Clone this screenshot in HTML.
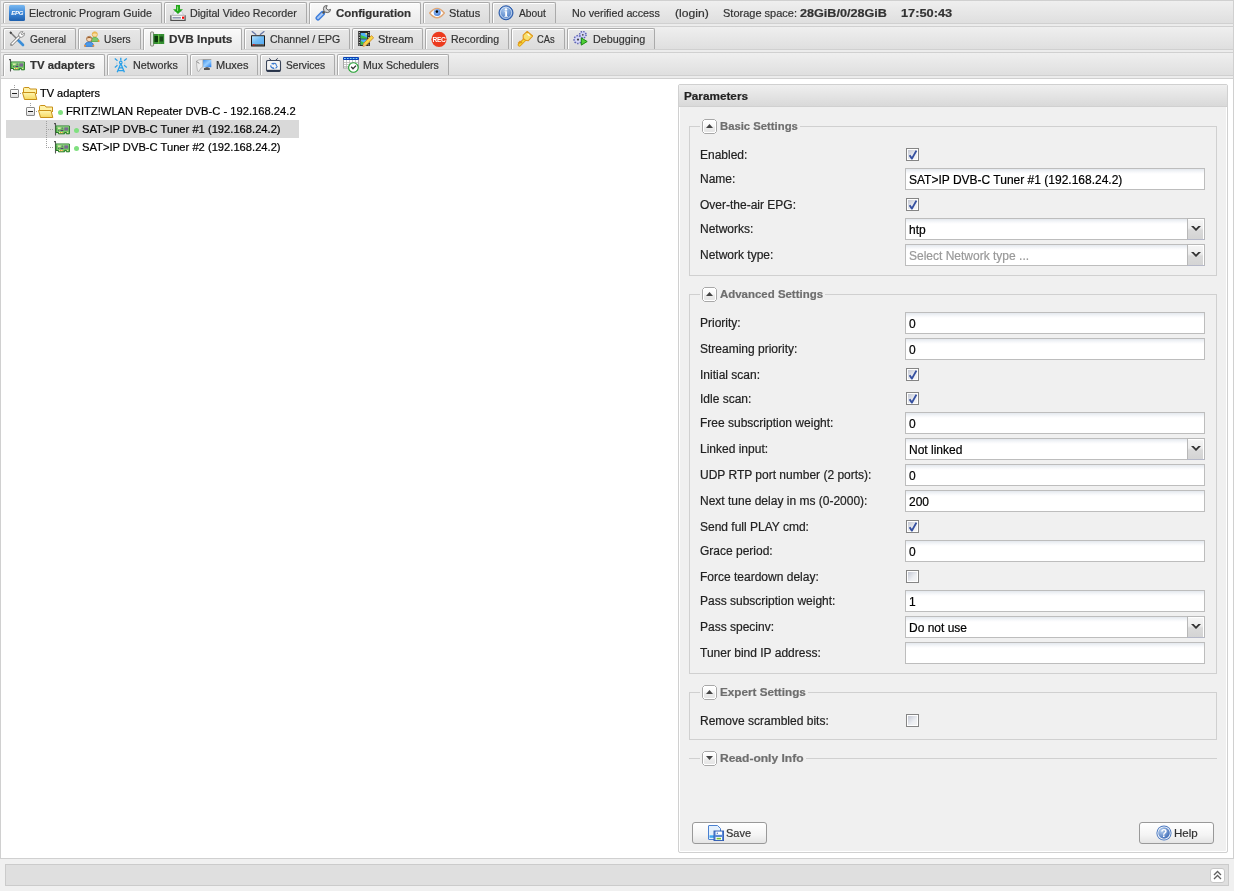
<!DOCTYPE html>
<html><head><meta charset="utf-8"><style>
html,body{margin:0;padding:0;}
body{width:1234px;height:891px;position:relative;overflow:hidden;background:#f0f0f0;font-family:"Liberation Sans", sans-serif;}
div,svg{box-sizing:border-box;}
#wrap{position:absolute;left:0;top:0;width:1234px;height:891px;will-change:transform;-webkit-text-stroke:0.2px;}
</style></head><body><div id="wrap">
<div style="position:absolute;left:0px;top:0px;width:1234px;height:859px;background:#fff;border:1px solid #d0d0d0;"></div>
<div style="position:absolute;left:1px;top:1px;width:1232px;height:22px;background:linear-gradient(#efefef,#dfdfdf);"></div>
<div style="position:absolute;left:1px;top:23px;width:1232px;height:1px;background:#d0d0d0;"></div>
<div style="position:absolute;left:1px;top:24px;width:1232px;height:2px;background:#ececec;"></div>
<div style="position:absolute;left:1px;top:26px;width:1232px;height:1px;background:#d0d0d0;"></div>
<div style="position:absolute;left:3px;top:2px;width:159px;height:21px;background:linear-gradient(#e8e8e8,#dcdcdc);border:1px solid #aaaaaa;border-bottom:none;border-radius:2px 2px 0 0;box-shadow:inset 1px 1px 0 #fff;"></div>
<svg style="position:absolute;left:9px;top:5px" width="16" height="16" viewBox="0 0 16 16"><defs><linearGradient id="gepg" x1="0" y1="0" x2="0" y2="1"><stop offset="0" stop-color="#79b8f0"/><stop offset="0.5" stop-color="#3d86d6"/><stop offset="1" stop-color="#1d5fae"/></linearGradient></defs>
<rect x="0" y="0" width="16" height="16" rx="1.5" fill="url(#gepg)"/>
<text x="8.2" y="9.6" font-family="Liberation Sans" font-size="6" font-weight="700" font-style="italic" fill="#fff" text-anchor="middle" letter-spacing="-0.2">EPG</text></svg>
<div style="position:absolute;left:29.02px;top:6.69px;font-size:11px;line-height:13px;font-weight:400;color:#333;white-space:pre;transform:scaleX(0.9760);transform-origin:0 0;">Electronic Program Guide</div>
<div style="position:absolute;left:164px;top:2px;width:143px;height:21px;background:linear-gradient(#e8e8e8,#dcdcdc);border:1px solid #aaaaaa;border-bottom:none;border-radius:2px 2px 0 0;box-shadow:inset 1px 1px 0 #fff;"></div>
<svg style="position:absolute;left:170px;top:5px" width="16" height="16" viewBox="0 0 16 16"><path d="M2.5 10.2 L4.2 6.5 H11.8 L13.5 10.2 Z" fill="#f2f0fa" stroke="#c0c0c8" stroke-width="0.7"/>
<path d="M0.9 10.2 V15.4 H15.1 V10.2" fill="#fff" stroke="#505050" stroke-width="1.2"/>
<path d="M1 10.4 H15" stroke="#b0b0b0" stroke-width="0.9"/>
<rect x="2.5" y="11.9" width="8.5" height="1.7" fill="#9098b0"/><rect x="12" y="11.6" width="2.2" height="2.2" fill="#f00"/>
<path d="M6 0 H10 V4.3 H13 L8 9 L3 4.3 H6 Z" fill="#22a81a"/><path d="M7.6 1.5 V6" stroke="#90e080" stroke-width="1"/></svg>
<div style="position:absolute;left:190.03px;top:6.69px;font-size:11px;line-height:13px;font-weight:400;color:#333;white-space:pre;transform:scaleX(0.9725);transform-origin:0 0;">Digital Video Recorder</div>
<div style="position:absolute;left:309px;top:2px;width:112px;height:22px;background:linear-gradient(#fafafa,#ebebeb);border:1px solid #aaaaaa;border-bottom:none;border-radius:2px 2px 0 0;box-shadow:inset 1px 1px 0 #fff;"></div>
<svg style="position:absolute;left:315px;top:5px" width="16" height="16" viewBox="0 0 16 16"><path d="M3 13 L7.5 8.5" stroke="#3f7fdc" stroke-width="5" stroke-linecap="round"/>
<path d="M3 13 L7.3 8.7" stroke="#a9c8f4" stroke-width="2" stroke-linecap="round"/>
<path d="M7.6 8.4 L10 6" stroke="#555" stroke-width="2"/>
<path d="M9.2 6.8 L8.4 3.6 Q8.6 0.6 11.4 0.5 L12.2 0.6 L11 3 L13 5.2 L15.6 4.4 Q15.4 7.6 12.4 7.6 Z" fill="#d8d8d8" stroke="#505050" stroke-width="0.9"/></svg>
<div style="position:absolute;left:336.00px;top:6.69px;font-size:11px;line-height:13px;font-weight:700;color:#333;white-space:pre;transform:scaleX(1.0417);transform-origin:0 0;">Configuration</div>
<div style="position:absolute;left:423px;top:2px;width:67px;height:21px;background:linear-gradient(#e8e8e8,#dcdcdc);border:1px solid #aaaaaa;border-bottom:none;border-radius:2px 2px 0 0;box-shadow:inset 1px 1px 0 #fff;"></div>
<svg style="position:absolute;left:429px;top:5px" width="16" height="16" viewBox="0 0 16 16"><path d="M0.7 8 Q8 -1.2 15.3 8 Q8 17.4 0.7 8 Z" fill="#fff" stroke="#e0a878" stroke-width="1.5"/>
<defs><radialGradient id="giris" cx="0.4" cy="0.35" r="0.7"><stop offset="0" stop-color="#9cc4f8"/><stop offset="1" stop-color="#4a80d8"/></radialGradient></defs>
<circle cx="8.2" cy="7.6" r="3.5" fill="url(#giris)"/><circle cx="7.9" cy="6.6" r="1.3" fill="#000"/></svg>
<div style="position:absolute;left:449.00px;top:6.69px;font-size:11px;line-height:13px;font-weight:400;color:#333;white-space:pre;transform:scaleX(1.0000);transform-origin:0 0;">Status</div>
<div style="position:absolute;left:492px;top:2px;width:64px;height:21px;background:linear-gradient(#e8e8e8,#dcdcdc);border:1px solid #aaaaaa;border-bottom:none;border-radius:2px 2px 0 0;box-shadow:inset 1px 1px 0 #fff;"></div>
<svg style="position:absolute;left:498px;top:5px" width="16" height="16" viewBox="0 0 16 16"><defs><radialGradient id="gab" cx="0.4" cy="0.3" r="0.8"><stop offset="0" stop-color="#a6c6ee"/><stop offset="1" stop-color="#3468b8"/></radialGradient></defs>
<circle cx="8" cy="7.8" r="7" fill="url(#gab)" stroke="#2858a8" stroke-width="1"/>
<circle cx="8" cy="7.8" r="5.6" fill="none" stroke="#e8f0fa" stroke-width="0.7"/>
<circle cx="8" cy="4.4" r="1.2" fill="#fff"/><path d="M6.6 6.3 H9 V11 H9.8 V11.8 H6.4 V11 H7.2 V7.1 H6.6Z" fill="#fff"/></svg>
<div style="position:absolute;left:519.00px;top:6.69px;font-size:11px;line-height:13px;font-weight:400;color:#333;white-space:pre;transform:scaleX(0.9310);transform-origin:0 0;">About</div>
<div style="position:absolute;left:1px;top:27px;width:1232px;height:22px;background:linear-gradient(#efefef,#dfdfdf);"></div>
<div style="position:absolute;left:1px;top:49px;width:1232px;height:1px;background:#d0d0d0;"></div>
<div style="position:absolute;left:1px;top:50px;width:1232px;height:2px;background:#ececec;"></div>
<div style="position:absolute;left:1px;top:52px;width:1232px;height:1px;background:#d0d0d0;"></div>
<div style="position:absolute;left:3px;top:28px;width:73px;height:21px;background:linear-gradient(#e8e8e8,#dcdcdc);border:1px solid #aaaaaa;border-bottom:none;border-radius:2px 2px 0 0;box-shadow:inset 1px 1px 0 #fff;"></div>
<svg style="position:absolute;left:9px;top:31px" width="16" height="16" viewBox="0 0 16 16"><path d="M1.5 1.5 L8.5 8.5" stroke="#777" stroke-width="1.4"/>
<path d="M1 1 L2.5 2.5" stroke="#444" stroke-width="1.8"/>
<path d="M9 9 L14 14" stroke="#3b8ed8" stroke-width="2.6" stroke-linecap="round"/>
<path d="M2.5 13.5 L11 5" stroke="#777" stroke-width="3" stroke-linecap="round"/>
<path d="M2.5 13.5 L11 5" stroke="#fff" stroke-width="1.6" stroke-linecap="round"/>
<path d="M10 6 Q9 3 11 1.2 Q12.5 0.3 14 0.7 L12 2.8 L13.2 4 L15.3 2 Q15.7 3.5 14.8 5 Q13 7 10 6 Z" fill="#fff" stroke="#777" stroke-width="0.8"/>
<circle cx="2.6" cy="13.4" r="0.7" fill="#999"/></svg>
<div style="position:absolute;left:30.00px;top:32.69px;font-size:11px;line-height:13px;font-weight:400;color:#333;white-space:pre;transform:scaleX(0.9231);transform-origin:0 0;">General</div>
<div style="position:absolute;left:78px;top:28px;width:63px;height:21px;background:linear-gradient(#e8e8e8,#dcdcdc);border:1px solid #aaaaaa;border-bottom:none;border-radius:2px 2px 0 0;box-shadow:inset 1px 1px 0 #fff;"></div>
<svg style="position:absolute;left:84px;top:31px" width="16" height="16" viewBox="0 0 16 16"><circle cx="10.8" cy="3.4" r="2.6" fill="#f8dca0" stroke="#e0a030" stroke-width="0.7"/>
<path d="M8.2 2.8 Q10.8 -0.5 13.4 2.8 Q10.8 1.6 8.2 2.8Z" fill="#e8a828"/>
<path d="M7 10.5 Q7 6.4 10.8 6.4 Q14.6 6.4 14.6 10.5 Z" fill="#7cc86a" stroke="#48a038" stroke-width="0.7"/>
<circle cx="14.6" cy="10" r="1" fill="#f09030"/>
<circle cx="5.2" cy="8" r="2.7" fill="#f6d8b8" stroke="#9a6030" stroke-width="0.7"/>
<path d="M2.5 7.6 Q5.2 3.8 7.9 7.6 Q5.2 6.3 2.5 7.6Z" fill="#9a5a28"/>
<path d="M0.8 15.4 Q0.8 11 5.2 11 Q9.6 11 9.6 15.4 Z" fill="#4a9ae8" stroke="#2a68c0" stroke-width="0.7"/>
<circle cx="1" cy="14.8" r="1" fill="#f09030"/><circle cx="9.4" cy="14.8" r="1" fill="#f09030"/></svg>
<div style="position:absolute;left:104.07px;top:32.69px;font-size:11px;line-height:13px;font-weight:400;color:#333;white-space:pre;transform:scaleX(0.9286);transform-origin:0 0;">Users</div>
<div style="position:absolute;left:143px;top:28px;width:99px;height:22px;background:linear-gradient(#fafafa,#ebebeb);border:1px solid #aaaaaa;border-bottom:none;border-radius:2px 2px 0 0;box-shadow:inset 1px 1px 0 #fff;"></div>
<svg style="position:absolute;left:149px;top:31px" width="16" height="16" viewBox="0 0 16 16"><rect x="1.6" y="1" width="3" height="14" rx="0.8" fill="#dfe8e0" stroke="#6a6a5a" stroke-width="0.8"/>
<rect x="4.4" y="3" width="10.8" height="10" fill="#2e8a2e"/>
<rect x="5.5" y="5" width="3.8" height="6" fill="#0a3a0a"/><rect x="10.5" y="5.5" width="3.5" height="5" fill="#1a4a1a"/>
<path d="M9.6 3.5 V12.5" stroke="#6ac040" stroke-width="1.2"/>
<path d="M4.8 4 H15 M4.8 12 H15" stroke="#5ab048" stroke-width="0.6" stroke-dasharray="0.8 0.8"/></svg>
<div style="position:absolute;left:168.93px;top:32.69px;font-size:11px;line-height:13px;font-weight:700;color:#333;white-space:pre;transform:scaleX(1.0690);transform-origin:0 0;">DVB Inputs</div>
<div style="position:absolute;left:244px;top:28px;width:106px;height:21px;background:linear-gradient(#e8e8e8,#dcdcdc);border:1px solid #aaaaaa;border-bottom:none;border-radius:2px 2px 0 0;box-shadow:inset 1px 1px 0 #fff;"></div>
<svg style="position:absolute;left:250px;top:31px" width="16" height="16" viewBox="0 0 16 16"><path d="M1.8 0.2 L6.2 3.8 M14.4 0.2 L10 3.8" stroke="#6878a8" stroke-width="1.3"/>
<rect x="1" y="4.2" width="14" height="11.4" rx="0.6" fill="#1a1a1a"/>
<defs><linearGradient id="gtv" x1="0" y1="0" x2="1" y2="1"><stop offset="0" stop-color="#b8e4ff"/><stop offset="0.5" stop-color="#70bcf4"/><stop offset="1" stop-color="#58acf4"/></linearGradient></defs>
<rect x="2" y="5.2" width="12" height="7.8" fill="url(#gtv)"/>
<rect x="2" y="13" width="12" height="1.5" fill="#707070"/><rect x="3.2" y="13.1" width="1.3" height="1.3" fill="#f00"/>
<path d="M5.5 13.75 H13.5" stroke="#333" stroke-width="0.6" stroke-dasharray="0.8 1.2"/></svg>
<div style="position:absolute;left:270.04px;top:32.69px;font-size:11px;line-height:13px;font-weight:400;color:#333;white-space:pre;transform:scaleX(0.9583);transform-origin:0 0;">Channel / EPG</div>
<div style="position:absolute;left:352px;top:28px;width:71px;height:21px;background:linear-gradient(#e8e8e8,#dcdcdc);border:1px solid #aaaaaa;border-bottom:none;border-radius:2px 2px 0 0;box-shadow:inset 1px 1px 0 #fff;"></div>
<svg style="position:absolute;left:358px;top:31px" width="16" height="16" viewBox="0 0 16 16"><rect x="0.2" y="0" width="11.8" height="15" fill="#2a2a2a"/>
<path d="M1.4 1 V14.5 M10.8 1 V14.5" stroke="#fff" stroke-width="0.9" stroke-dasharray="0.9 1.6"/>
<rect x="2.7" y="2" width="6.4" height="5.4" fill="#50b0f8"/><path d="M2.7 4 L9.1 6.5 V7.4 H2.7Z" fill="#40c040"/><circle cx="8.2" cy="2.8" r="0.9" fill="#f8e060"/>
<rect x="2.7" y="8.4" width="6.4" height="5.4" fill="#50b0f8"/><path d="M2.7 10 L9.1 13 V13.8 H2.7Z" fill="#40c040"/>
<path d="M5 15.4 L6 12 L13.5 4.6 L15.6 6.8 L8.3 14.2 Z" fill="#f8d848" stroke="#d08a28" stroke-width="0.9"/>
<path d="M5 15.4 L6 12 L8.3 14.2 Z" fill="#f0c080"/></svg>
<div style="position:absolute;left:378.00px;top:32.69px;font-size:11px;line-height:13px;font-weight:400;color:#333;white-space:pre;transform:scaleX(1.0000);transform-origin:0 0;">Stream</div>
<div style="position:absolute;left:425px;top:28px;width:84px;height:21px;background:linear-gradient(#e8e8e8,#dcdcdc);border:1px solid #aaaaaa;border-bottom:none;border-radius:2px 2px 0 0;box-shadow:inset 1px 1px 0 #fff;"></div>
<svg style="position:absolute;left:431px;top:31px" width="16" height="16" viewBox="0 0 16 16"><circle cx="8" cy="8.3" r="7.6" fill="#ec3a1e"/>
<text x="8" y="10.6" font-family="Liberation Sans" font-size="6.6" font-weight="700" fill="#fff" text-anchor="middle" letter-spacing="-0.3">REC</text></svg>
<div style="position:absolute;left:451.04px;top:32.69px;font-size:11px;line-height:13px;font-weight:400;color:#333;white-space:pre;transform:scaleX(0.9592);transform-origin:0 0;">Recording</div>
<div style="position:absolute;left:511px;top:28px;width:54px;height:21px;background:linear-gradient(#e8e8e8,#dcdcdc);border:1px solid #aaaaaa;border-bottom:none;border-radius:2px 2px 0 0;box-shadow:inset 1px 1px 0 #fff;"></div>
<svg style="position:absolute;left:517px;top:31px" width="16" height="16" viewBox="0 0 16 16"><path d="M2.5 13.8 L8.5 7.8" stroke="#e09818" stroke-width="3.6" stroke-linecap="round"/>
<path d="M2.5 13.8 L8.5 7.8" stroke="#f4d838" stroke-width="1.8" stroke-linecap="round"/>
<path d="M1.2 12.5 L3 10.7 L4 11.7 L5 10.7" stroke="#e09818" stroke-width="1.6" fill="none"/>
<path d="M6.2 4.2 L10.2 0.4 L15.6 5 L11.2 9.8 Q8.2 9.8 6.2 7.4 Z" fill="#f8e070" stroke="#e09818" stroke-width="1.1"/>
<path d="M10.6 3 L12.6 4.8" stroke="#fff" stroke-width="1.1"/></svg>
<div style="position:absolute;left:537.15px;top:32.69px;font-size:11px;line-height:13px;font-weight:400;color:#333;white-space:pre;transform:scaleX(0.8500);transform-origin:0 0;">CAs</div>
<div style="position:absolute;left:567px;top:28px;width:88px;height:21px;background:linear-gradient(#e8e8e8,#dcdcdc);border:1px solid #aaaaaa;border-bottom:none;border-radius:2px 2px 0 0;box-shadow:inset 1px 1px 0 #fff;"></div>
<svg style="position:absolute;left:573px;top:31px" width="16" height="16" viewBox="0 0 16 16"><g fill="#c0c2ee" stroke="#5a60b0" stroke-width="1.5">
<circle cx="9.8" cy="3.8" r="3.3" stroke-dasharray="1.3 1.3"/><circle cx="5" cy="8.6" r="4" stroke-dasharray="1.4 1.4"/></g>
<circle cx="9.8" cy="3.8" r="2.2" fill="#d4d6f6"/><circle cx="5" cy="8.6" r="2.8" fill="#d8daf8"/>
<circle cx="9.8" cy="3.8" r="0.9" fill="#444"/><circle cx="5" cy="8.6" r="1.1" fill="#444"/>
<path d="M8.3 6.9 L14.2 10.5 L8.3 14.1 Z" fill="#50d038" stroke="#1a8a10" stroke-width="1"/></svg>
<div style="position:absolute;left:593.02px;top:32.69px;font-size:11px;line-height:13px;font-weight:400;color:#333;white-space:pre;transform:scaleX(0.9808);transform-origin:0 0;">Debugging</div>
<div style="position:absolute;left:1px;top:53px;width:1232px;height:22px;background:linear-gradient(#efefef,#dfdfdf);"></div>
<div style="position:absolute;left:1px;top:75px;width:1232px;height:1px;background:#d0d0d0;"></div>
<div style="position:absolute;left:1px;top:76px;width:1232px;height:2px;background:#ececec;"></div>
<div style="position:absolute;left:1px;top:78px;width:1232px;height:1px;background:#d0d0d0;"></div>
<div style="position:absolute;left:3px;top:54px;width:102px;height:22px;background:linear-gradient(#fafafa,#ebebeb);border:1px solid #aaaaaa;border-bottom:none;border-radius:2px 2px 0 0;box-shadow:inset 1px 1px 0 #fff;"></div>
<svg style="position:absolute;left:9px;top:57px" width="16" height="16" viewBox="0 0 16 16"><path d="M1.5 2.5 V14.5" stroke="#555" stroke-width="1.1"/><path d="M0 2.6 H2" stroke="#555" stroke-width="1.2"/>
<path d="M2 5 H15.4 V12.8 H12.3 V11.4 H10.6 V12.8 H4.5 V11.5 H2 Z" fill="#78c868" stroke="#237a23" stroke-width="1"/>
<rect x="2.5" y="5.5" width="12.5" height="1" fill="#9ad890"/>
<rect x="4" y="6.6" width="2.6" height="1.2" fill="#f4f0b8"/><rect x="6.5" y="8.8" width="2.8" height="1.2" fill="#553a70"/>
<rect x="4.2" y="9" width="0.9" height="0.9" fill="#553a70"/><rect x="7.8" y="6.6" width="1" height="1" fill="#553a70"/>
<rect x="10.3" y="6.4" width="3.8" height="3.2" fill="#7a6a90"/>
<rect x="5" y="11" width="4" height="1.1" fill="#f8f0a0"/><rect x="6" y="11" width="0.9" height="1.1" fill="#e89030"/><rect x="7.8" y="11" width="0.9" height="1.1" fill="#e89030"/>
<rect x="13.2" y="11" width="1" height="1" fill="#f8f0a0"/></svg>
<div style="position:absolute;left:30.00px;top:58.69px;font-size:11px;line-height:13px;font-weight:700;color:#333;white-space:pre;transform:scaleX(1.0317);transform-origin:0 0;">TV adapters</div>
<div style="position:absolute;left:107px;top:54px;width:81px;height:21px;background:linear-gradient(#e8e8e8,#dcdcdc);border:1px solid #aaaaaa;border-bottom:none;border-radius:2px 2px 0 0;box-shadow:inset 1px 1px 0 #fff;"></div>
<svg style="position:absolute;left:113px;top:57px" width="16" height="16" viewBox="0 0 16 16"><g stroke="#2aa0e8" fill="none">
<path d="M7.8 6.5 L4.2 15.2 M7.8 6.5 L11.4 15.2 M5.5 10.8 H10 M4.8 13.6 H10.8" stroke-width="1.3"/>
<circle cx="7.8" cy="5.4" r="1.3" stroke-width="1.1"/>
<path d="M7.8 0.8 V3.5" stroke-width="1.3"/>
<path d="M1.8 1.5 L4.5 3.8 M13.8 1.5 L11.1 3.8 M1.8 10.5 L4.5 8.2 M13.8 10.5 L11.1 8.2" stroke-width="1.2"/>
<path d="M3.8 5.5 V7.5 M11.8 5.5 V7.5" stroke-width="0.6" opacity="0.5"/></g></svg>
<div style="position:absolute;left:133.02px;top:58.69px;font-size:11px;line-height:13px;font-weight:400;color:#333;white-space:pre;transform:scaleX(0.9778);transform-origin:0 0;">Networks</div>
<div style="position:absolute;left:190px;top:54px;width:68px;height:21px;background:linear-gradient(#e8e8e8,#dcdcdc);border:1px solid #aaaaaa;border-bottom:none;border-radius:2px 2px 0 0;box-shadow:inset 1px 1px 0 #fff;"></div>
<svg style="position:absolute;left:196px;top:57px" width="16" height="16" viewBox="0 0 16 16"><defs><linearGradient id="gmux" x1="0" y1="0" x2="1" y2="1"><stop offset="0" stop-color="#3a90f0"/><stop offset="0.5" stop-color="#9ad0ff"/><stop offset="1" stop-color="#1a78f0"/></linearGradient></defs>
<rect x="6.8" y="2" width="8.5" height="0.9" fill="#999"/>
<rect x="6.8" y="3" width="8.5" height="7.2" fill="url(#gmux)"/>
<path d="M8 11.2 H13.8 V12.8 H8Z" fill="#333"/><path d="M9.5 10.2 H12.5 V11.2 H9.5Z" fill="#555"/>
<path d="M0.5 4 Q2 2.5 6.8 2.5 V10 Q4 11 3 14.5 L1.5 14 Q0.5 9 0.5 4Z" fill="#eee" stroke="#999" stroke-width="0.6"/>
<path d="M1 4.5 L3 6.5" stroke="#666" stroke-width="1"/></svg>
<div style="position:absolute;left:216.00px;top:58.69px;font-size:11px;line-height:13px;font-weight:400;color:#333;white-space:pre;transform:scaleX(1.0000);transform-origin:0 0;">Muxes</div>
<div style="position:absolute;left:260px;top:54px;width:75px;height:21px;background:linear-gradient(#e8e8e8,#dcdcdc);border:1px solid #aaaaaa;border-bottom:none;border-radius:2px 2px 0 0;box-shadow:inset 1px 1px 0 #fff;"></div>
<svg style="position:absolute;left:266px;top:57px" width="16" height="16" viewBox="0 0 16 16"><path d="M3 1.4 L5.2 3.2 M11.8 1.4 L9.6 3.2" stroke="#3a4458" stroke-width="1"/>
<rect x="0.5" y="3.5" width="14" height="11" rx="1.5" fill="#f4f4f4" stroke="#3a4458" stroke-width="1.1"/>
<rect x="1" y="12.8" width="13" height="1.8" fill="#28344a"/>
<path d="M5.6 7.2 Q6.5 6 8 6.5 L7.2 7.5 M10.6 8.8 Q10 6.5 8.5 6 M4.6 8.4 Q4.8 10.8 7.6 11.4 L6.8 10.2 M9.5 11.3 Q11 10.6 11.2 9" stroke="#3a7ad0" stroke-width="1.1" fill="none"/></svg>
<div style="position:absolute;left:286.07px;top:58.69px;font-size:11px;line-height:13px;font-weight:400;color:#333;white-space:pre;transform:scaleX(0.9268);transform-origin:0 0;">Services</div>
<div style="position:absolute;left:337px;top:54px;width:112px;height:21px;background:linear-gradient(#e8e8e8,#dcdcdc);border:1px solid #aaaaaa;border-bottom:none;border-radius:2px 2px 0 0;box-shadow:inset 1px 1px 0 #fff;"></div>
<svg style="position:absolute;left:343px;top:57px" width="16" height="16" viewBox="0 0 16 16"><rect x="0.5" y="2.5" width="15" height="8.5" fill="#fff" stroke="#a0a0a0" stroke-width="0.9"/>
<path d="M0.5 5.5 H15.5 M0.5 7.5 H15.5 M0.5 9.5 H15.5 M3.5 3 V11 M6.5 3 V11 M9.5 3 V11 M12.5 3 V11" stroke="#b0b0b0" stroke-width="0.7"/>
<rect x="0" y="0" width="16" height="3" rx="1" fill="#0a40b8"/>
<path d="M1 1.5 H15" stroke="#90e8ff" stroke-width="0.9" stroke-dasharray="1.8 1.1"/>
<circle cx="10.4" cy="10.5" r="4.8" fill="#fff" stroke="#20a030" stroke-width="1.1"/>
<path d="M8.2 9.8 L10 11.8 L13 8.6" stroke="#333" stroke-width="1.3" fill="none"/></svg>
<div style="position:absolute;left:363.04px;top:58.69px;font-size:11px;line-height:13px;font-weight:400;color:#333;white-space:pre;transform:scaleX(0.9615);transform-origin:0 0;">Mux Schedulers</div>
<div style="position:absolute;left:572.02px;top:6.69px;font-size:11px;line-height:13px;font-weight:400;color:#333;white-space:pre;transform:scaleX(0.9775);transform-origin:0 0;">No verified access</div>
<div style="position:absolute;left:674.90px;top:6.69px;font-size:11px;line-height:13px;font-weight:400;color:#333;white-space:pre;transform:scaleX(1.1034);transform-origin:0 0;">(login)</div>
<div style="position:absolute;left:723.00px;top:6.69px;font-size:11px;line-height:13px;font-weight:400;color:#333;white-space:pre;transform:scaleX(1.0000);transform-origin:0 0;">Storage space:</div>
<div style="position:absolute;left:800.00px;top:6.69px;font-size:11px;line-height:13px;font-weight:700;color:#333;white-space:pre;transform:scaleX(1.1467);transform-origin:0 0;">28GiB/0/28GiB</div>
<div style="position:absolute;left:900.84px;top:6.69px;font-size:11px;line-height:13px;font-weight:700;color:#333;white-space:pre;transform:scaleX(1.1628);transform-origin:0 0;">17:50:43</div>
<div style="position:absolute;left:6px;top:120px;width:293px;height:18px;background:#d9d9d9;"></div>
<div style="position:absolute;left:14px;top:85px;width:1px;height:1px;background:#a0a0a0;"></div>
<div style="position:absolute;left:14px;top:87px;width:1px;height:1px;background:#a0a0a0;"></div>
<div style="position:absolute;left:20px;top:93px;width:1px;height:1px;background:#a0a0a0;"></div>
<div style="position:absolute;left:10px;top:89px;width:9px;height:9px;background:linear-gradient(#fff,#e0e0e0);border:1px solid #888;border-radius:1px;"></div>
<div style="position:absolute;left:12px;top:93px;width:5px;height:1px;background:#222;"></div>
<svg style="position:absolute;left:22px;top:85px" width="16" height="16" viewBox="0 0 16 16"><defs><linearGradient id="gfold" x1="0" y1="0" x2="0" y2="1"><stop offset="0" stop-color="#fff6b0"/><stop offset="1" stop-color="#f6d860"/></linearGradient></defs>
<path d="M1.5 7 V3.6 Q1.5 2.5 2.6 2.5 H7 L8 4 H14.5 V9" fill="#fff2a8" stroke="#c89018" stroke-width="1"/>
<path d="M0.5 7.5 H13 L14.8 14.5 H2.5 Z" fill="url(#gfold)" stroke="#c89018" stroke-width="1"/></svg>
<div style="position:absolute;left:40.00px;top:86.69px;font-size:11px;line-height:13px;font-weight:400;color:#000;white-space:pre;transform:scaleX(1.0000);transform-origin:0 0;">TV adapters</div>
<div style="position:absolute;left:30px;top:103px;width:1px;height:1px;background:#a0a0a0;"></div>
<div style="position:absolute;left:30px;top:105px;width:1px;height:1px;background:#a0a0a0;"></div>
<div style="position:absolute;left:36px;top:111px;width:1px;height:1px;background:#a0a0a0;"></div>
<div style="position:absolute;left:26px;top:107px;width:9px;height:9px;background:linear-gradient(#fff,#e0e0e0);border:1px solid #888;border-radius:1px;"></div>
<div style="position:absolute;left:28px;top:111px;width:5px;height:1px;background:#222;"></div>
<svg style="position:absolute;left:38px;top:103px" width="16" height="16" viewBox="0 0 16 16"><defs><linearGradient id="gfold" x1="0" y1="0" x2="0" y2="1"><stop offset="0" stop-color="#fff6b0"/><stop offset="1" stop-color="#f6d860"/></linearGradient></defs>
<path d="M1.5 7 V3.6 Q1.5 2.5 2.6 2.5 H7 L8 4 H14.5 V9" fill="#fff2a8" stroke="#c89018" stroke-width="1"/>
<path d="M0.5 7.5 H13 L14.8 14.5 H2.5 Z" fill="url(#gfold)" stroke="#c89018" stroke-width="1"/></svg>
<div style="position:absolute;left:57.8px;top:109.5px;width:5px;height:5px;border-radius:50%;background:#80e080;"></div>
<div style="position:absolute;left:65.98px;top:104.69px;font-size:11px;line-height:13px;font-weight:400;color:#000;white-space:pre;transform:scaleX(1.0179);transform-origin:0 0;">FRITZ!WLAN Repeater DVB-C - 192.168.24.2</div>
<div style="position:absolute;left:46px;top:121px;width:1px;height:1px;background:#a0a0a0;"></div>
<div style="position:absolute;left:46px;top:123px;width:1px;height:1px;background:#a0a0a0;"></div>
<div style="position:absolute;left:46px;top:125px;width:1px;height:1px;background:#a0a0a0;"></div>
<div style="position:absolute;left:46px;top:127px;width:1px;height:1px;background:#a0a0a0;"></div>
<div style="position:absolute;left:46px;top:129px;width:1px;height:1px;background:#a0a0a0;"></div>
<div style="position:absolute;left:46px;top:131px;width:1px;height:1px;background:#a0a0a0;"></div>
<div style="position:absolute;left:46px;top:133px;width:1px;height:1px;background:#a0a0a0;"></div>
<div style="position:absolute;left:46px;top:135px;width:1px;height:1px;background:#a0a0a0;"></div>
<div style="position:absolute;left:46px;top:137px;width:1px;height:1px;background:#a0a0a0;"></div>
<div style="position:absolute;left:46px;top:139px;width:1px;height:1px;background:#a0a0a0;"></div>
<div style="position:absolute;left:46px;top:141px;width:1px;height:1px;background:#a0a0a0;"></div>
<div style="position:absolute;left:46px;top:143px;width:1px;height:1px;background:#a0a0a0;"></div>
<div style="position:absolute;left:46px;top:145px;width:1px;height:1px;background:#a0a0a0;"></div>
<div style="position:absolute;left:46px;top:147px;width:1px;height:1px;background:#a0a0a0;"></div>
<div style="position:absolute;left:48px;top:129px;width:1px;height:1px;background:#a0a0a0;"></div>
<div style="position:absolute;left:50px;top:129px;width:1px;height:1px;background:#a0a0a0;"></div>
<div style="position:absolute;left:52px;top:129px;width:1px;height:1px;background:#a0a0a0;"></div>
<div style="position:absolute;left:48px;top:147px;width:1px;height:1px;background:#a0a0a0;"></div>
<div style="position:absolute;left:50px;top:147px;width:1px;height:1px;background:#a0a0a0;"></div>
<div style="position:absolute;left:52px;top:147px;width:1px;height:1px;background:#a0a0a0;"></div>
<svg style="position:absolute;left:54px;top:121px" width="16" height="16" viewBox="0 0 16 16"><path d="M1.5 2.5 V14.5" stroke="#555" stroke-width="1.1"/><path d="M0 2.6 H2" stroke="#555" stroke-width="1.2"/>
<path d="M2 5 H15.4 V12.8 H12.3 V11.4 H10.6 V12.8 H4.5 V11.5 H2 Z" fill="#78c868" stroke="#237a23" stroke-width="1"/>
<rect x="2.5" y="5.5" width="12.5" height="1" fill="#9ad890"/>
<rect x="4" y="6.6" width="2.6" height="1.2" fill="#f4f0b8"/><rect x="6.5" y="8.8" width="2.8" height="1.2" fill="#553a70"/>
<rect x="4.2" y="9" width="0.9" height="0.9" fill="#553a70"/><rect x="7.8" y="6.6" width="1" height="1" fill="#553a70"/>
<rect x="10.3" y="6.4" width="3.8" height="3.2" fill="#7a6a90"/>
<rect x="5" y="11" width="4" height="1.1" fill="#f8f0a0"/><rect x="6" y="11" width="0.9" height="1.1" fill="#e89030"/><rect x="7.8" y="11" width="0.9" height="1.1" fill="#e89030"/>
<rect x="13.2" y="11" width="1" height="1" fill="#f8f0a0"/></svg>
<div style="position:absolute;left:73.8px;top:127.5px;width:5px;height:5px;border-radius:50%;background:#80e080;"></div>
<div style="position:absolute;left:81.98px;top:122.69px;font-size:11px;line-height:13px;font-weight:400;color:#000;white-space:pre;transform:scaleX(1.0155);transform-origin:0 0;">SAT&gt;IP DVB-C Tuner #1 (192.168.24.2)</div>
<svg style="position:absolute;left:54px;top:139px" width="16" height="16" viewBox="0 0 16 16"><path d="M1.5 2.5 V14.5" stroke="#555" stroke-width="1.1"/><path d="M0 2.6 H2" stroke="#555" stroke-width="1.2"/>
<path d="M2 5 H15.4 V12.8 H12.3 V11.4 H10.6 V12.8 H4.5 V11.5 H2 Z" fill="#78c868" stroke="#237a23" stroke-width="1"/>
<rect x="2.5" y="5.5" width="12.5" height="1" fill="#9ad890"/>
<rect x="4" y="6.6" width="2.6" height="1.2" fill="#f4f0b8"/><rect x="6.5" y="8.8" width="2.8" height="1.2" fill="#553a70"/>
<rect x="4.2" y="9" width="0.9" height="0.9" fill="#553a70"/><rect x="7.8" y="6.6" width="1" height="1" fill="#553a70"/>
<rect x="10.3" y="6.4" width="3.8" height="3.2" fill="#7a6a90"/>
<rect x="5" y="11" width="4" height="1.1" fill="#f8f0a0"/><rect x="6" y="11" width="0.9" height="1.1" fill="#e89030"/><rect x="7.8" y="11" width="0.9" height="1.1" fill="#e89030"/>
<rect x="13.2" y="11" width="1" height="1" fill="#f8f0a0"/></svg>
<div style="position:absolute;left:73.8px;top:145.5px;width:5px;height:5px;border-radius:50%;background:#80e080;"></div>
<div style="position:absolute;left:81.98px;top:140.69px;font-size:11px;line-height:13px;font-weight:400;color:#000;white-space:pre;transform:scaleX(1.0155);transform-origin:0 0;">SAT&gt;IP DVB-C Tuner #2 (192.168.24.2)</div>
<div style="position:absolute;left:678px;top:84px;width:550px;height:769px;background:#f0f0f0;border:1px solid #d0d0d0;border-radius:2px;box-shadow:inset 1px 1px 0 #fff, inset -1px -1px 0 #fff;"></div>
<div style="position:absolute;left:679px;top:85px;width:548px;height:21px;background:linear-gradient(#efefef,#d9d9d9);"></div>
<div style="position:absolute;left:679px;top:106px;width:548px;height:1px;background:#d0d0d0;"></div>
<div style="position:absolute;left:683.93px;top:89.69px;font-size:11px;line-height:13px;font-weight:700;color:#222;white-space:pre;transform:scaleX(1.0678);transform-origin:0 0;">Parameters</div>
<div style="position:absolute;left:689px;top:126px;width:528px;height:150px;border:1px solid #d0d0d0;"></div>
<div style="position:absolute;left:700px;top:118px;width:100px;height:16px;background:#f0f0f0;"></div>
<svg style="position:absolute;left:702px;top:119px" width="15" height="15"><defs><linearGradient id="gtg" x1="0" y1="0" x2="0" y2="1"><stop offset="0" stop-color="#fff"/><stop offset="0.45" stop-color="#f8f8f8"/><stop offset="0.55" stop-color="#ececec"/><stop offset="1" stop-color="#e6e6e6"/></linearGradient></defs><path d="M2.5 0.5 H12.5 L14.5 2.5 V12.5 L12.5 14.5 H2.5 L0.5 12.5 V2.5 Z" fill="#fff" stroke="#a8a8a8" stroke-width="1"/><rect x="2" y="2" width="11" height="11" rx="1" fill="url(#gtg)"/><path d="M4 9 H11 L7.5 5 Z" fill="#444"/></svg>
<div style="position:absolute;left:719.97px;top:120.29px;font-size:11px;line-height:13px;font-weight:700;color:#6e6e6e;white-space:pre;transform:scaleX(1.0267);transform-origin:0 0;">Basic Settings</div>
<div style="position:absolute;left:689px;top:294px;width:528px;height:380px;border:1px solid #d0d0d0;"></div>
<div style="position:absolute;left:700px;top:286px;width:125px;height:16px;background:#f0f0f0;"></div>
<svg style="position:absolute;left:702px;top:287px" width="15" height="15"><defs><linearGradient id="gtg" x1="0" y1="0" x2="0" y2="1"><stop offset="0" stop-color="#fff"/><stop offset="0.45" stop-color="#f8f8f8"/><stop offset="0.55" stop-color="#ececec"/><stop offset="1" stop-color="#e6e6e6"/></linearGradient></defs><path d="M2.5 0.5 H12.5 L14.5 2.5 V12.5 L12.5 14.5 H2.5 L0.5 12.5 V2.5 Z" fill="#fff" stroke="#a8a8a8" stroke-width="1"/><rect x="2" y="2" width="11" height="11" rx="1" fill="url(#gtg)"/><path d="M4 9 H11 L7.5 5 Z" fill="#444"/></svg>
<div style="position:absolute;left:720.00px;top:288.29px;font-size:11px;line-height:13px;font-weight:700;color:#6e6e6e;white-space:pre;transform:scaleX(1.0404);transform-origin:0 0;">Advanced Settings</div>
<div style="position:absolute;left:689px;top:692px;width:528px;height:48px;border:1px solid #d0d0d0;"></div>
<div style="position:absolute;left:700px;top:684px;width:108px;height:16px;background:#f0f0f0;"></div>
<svg style="position:absolute;left:702px;top:685px" width="15" height="15"><defs><linearGradient id="gtg" x1="0" y1="0" x2="0" y2="1"><stop offset="0" stop-color="#fff"/><stop offset="0.45" stop-color="#f8f8f8"/><stop offset="0.55" stop-color="#ececec"/><stop offset="1" stop-color="#e6e6e6"/></linearGradient></defs><path d="M2.5 0.5 H12.5 L14.5 2.5 V12.5 L12.5 14.5 H2.5 L0.5 12.5 V2.5 Z" fill="#fff" stroke="#a8a8a8" stroke-width="1"/><rect x="2" y="2" width="11" height="11" rx="1" fill="url(#gtg)"/><path d="M4 9 H11 L7.5 5 Z" fill="#444"/></svg>
<div style="position:absolute;left:719.94px;top:686.29px;font-size:11px;line-height:13px;font-weight:700;color:#6e6e6e;white-space:pre;transform:scaleX(1.0633);transform-origin:0 0;">Expert Settings</div>
<div style="position:absolute;left:689px;top:758px;width:528px;height:1px;background:#d0d0d0;"></div>
<div style="position:absolute;left:700px;top:750px;width:106px;height:16px;background:#f0f0f0;"></div>
<svg style="position:absolute;left:702px;top:751px" width="15" height="15"><defs><linearGradient id="gtg" x1="0" y1="0" x2="0" y2="1"><stop offset="0" stop-color="#fff"/><stop offset="0.45" stop-color="#f8f8f8"/><stop offset="0.55" stop-color="#ececec"/><stop offset="1" stop-color="#e6e6e6"/></linearGradient></defs><path d="M2.5 0.5 H12.5 L14.5 2.5 V12.5 L12.5 14.5 H2.5 L0.5 12.5 V2.5 Z" fill="#fff" stroke="#a8a8a8" stroke-width="1"/><rect x="2" y="2" width="11" height="11" rx="1" fill="url(#gtg)"/><path d="M4 5 H11 L7.5 9 Z" fill="#444"/></svg>
<div style="position:absolute;left:719.91px;top:752.29px;font-size:11px;line-height:13px;font-weight:700;color:#6e6e6e;white-space:pre;transform:scaleX(1.0933);transform-origin:0 0;">Read-only Info</div>
<div style="position:absolute;left:700.00px;top:148.34px;font-size:12px;line-height:14px;font-weight:400;color:#222;white-space:pre;">Enabled:</div>
<svg style="position:absolute;left:906px;top:148px" width="13" height="13"><defs><linearGradient id="gcb" x1="0" y1="0" x2="1" y2="1"><stop offset="0" stop-color="#c4c8d4"/><stop offset="0.6" stop-color="#eceef2"/><stop offset="1" stop-color="#f4f4f4"/></linearGradient></defs><rect x="0.5" y="0.5" width="12" height="12" fill="#fff" stroke="#858585"/><rect x="2" y="2" width="9" height="9" fill="url(#gcb)"/><path d="M3.6 7.2 L5.9 10.6 L10.4 2.6" stroke="#3550a0" stroke-width="1.9" fill="none" stroke-linejoin="round"/></svg>
<div style="position:absolute;left:700.00px;top:171.84px;font-size:12px;line-height:14px;font-weight:400;color:#222;white-space:pre;">Name:</div>
<div style="position:absolute;left:905px;top:168px;width:300px;height:22px;background:linear-gradient(#e4e8ee 0px,#f6f8fa 3px,#fff 5px,#fff);border:1px solid #bdbdbd;"></div>
<div style="position:absolute;left:909.00px;top:172.84px;font-size:12px;line-height:14px;font-weight:400;color:#000;white-space:pre;">SAT&gt;IP DVB-C Tuner #1 (192.168.24.2)</div>
<div style="position:absolute;left:700.00px;top:198.34px;font-size:12px;line-height:14px;font-weight:400;color:#222;white-space:pre;">Over-the-air EPG:</div>
<svg style="position:absolute;left:906px;top:198px" width="13" height="13"><defs><linearGradient id="gcb" x1="0" y1="0" x2="1" y2="1"><stop offset="0" stop-color="#c4c8d4"/><stop offset="0.6" stop-color="#eceef2"/><stop offset="1" stop-color="#f4f4f4"/></linearGradient></defs><rect x="0.5" y="0.5" width="12" height="12" fill="#fff" stroke="#858585"/><rect x="2" y="2" width="9" height="9" fill="url(#gcb)"/><path d="M3.6 7.2 L5.9 10.6 L10.4 2.6" stroke="#3550a0" stroke-width="1.9" fill="none" stroke-linejoin="round"/></svg>
<div style="position:absolute;left:700.00px;top:221.84px;font-size:12px;line-height:14px;font-weight:400;color:#222;white-space:pre;">Networks:</div>
<div style="position:absolute;left:905px;top:218px;width:300px;height:22px;background:linear-gradient(#e4e8ee 0px,#f6f8fa 3px,#fff 5px,#fff);border:1px solid #bdbdbd;"></div>
<div style="position:absolute;left:909.00px;top:222.84px;font-size:12px;line-height:14px;font-weight:400;color:#000;white-space:pre;">htp</div>
<div style="position:absolute;left:1187px;top:218px;width:18px;height:22px;background:linear-gradient(#f6f6f6,#ececec 45%,#dadada 55%,#d4d4d4);border:1px solid #b8b8b8;border-bottom-color:#b5b8c8;border-radius:0 2px 0 0;box-shadow:inset -1px 1px 0 #fff;"></div>
<svg style="position:absolute;left:1187px;top:218px" width="18" height="22"><path d="M4 8 H6.6 L9 10.4 L11.4 8 H14 L9 13 Z" fill="#333"/></svg>
<div style="position:absolute;left:700.00px;top:247.84px;font-size:12px;line-height:14px;font-weight:400;color:#222;white-space:pre;">Network type:</div>
<div style="position:absolute;left:905px;top:244px;width:300px;height:22px;background:linear-gradient(#e4e8ee 0px,#f6f8fa 3px,#fff 5px,#fff);border:1px solid #bdbdbd;"></div>
<div style="position:absolute;left:909.00px;top:248.84px;font-size:12px;line-height:14px;font-weight:400;color:#999;white-space:pre;">Select Network type ...</div>
<div style="position:absolute;left:1187px;top:244px;width:18px;height:22px;background:linear-gradient(#f6f6f6,#ececec 45%,#dadada 55%,#d4d4d4);border:1px solid #b8b8b8;border-bottom-color:#b5b8c8;border-radius:0 2px 0 0;box-shadow:inset -1px 1px 0 #fff;"></div>
<svg style="position:absolute;left:1187px;top:244px" width="18" height="22"><path d="M4 8 H6.6 L9 10.4 L11.4 8 H14 L9 13 Z" fill="#333"/></svg>
<div style="position:absolute;left:700.00px;top:315.84px;font-size:12px;line-height:14px;font-weight:400;color:#222;white-space:pre;">Priority:</div>
<div style="position:absolute;left:905px;top:312px;width:300px;height:22px;background:linear-gradient(#e4e8ee 0px,#f6f8fa 3px,#fff 5px,#fff);border:1px solid #bdbdbd;"></div>
<div style="position:absolute;left:909.00px;top:316.84px;font-size:12px;line-height:14px;font-weight:400;color:#000;white-space:pre;">0</div>
<div style="position:absolute;left:700.00px;top:341.84px;font-size:12px;line-height:14px;font-weight:400;color:#222;white-space:pre;">Streaming priority:</div>
<div style="position:absolute;left:905px;top:338px;width:300px;height:22px;background:linear-gradient(#e4e8ee 0px,#f6f8fa 3px,#fff 5px,#fff);border:1px solid #bdbdbd;"></div>
<div style="position:absolute;left:909.00px;top:342.84px;font-size:12px;line-height:14px;font-weight:400;color:#000;white-space:pre;">0</div>
<div style="position:absolute;left:700.00px;top:368.34px;font-size:12px;line-height:14px;font-weight:400;color:#222;white-space:pre;">Initial scan:</div>
<svg style="position:absolute;left:906px;top:368px" width="13" height="13"><defs><linearGradient id="gcb" x1="0" y1="0" x2="1" y2="1"><stop offset="0" stop-color="#c4c8d4"/><stop offset="0.6" stop-color="#eceef2"/><stop offset="1" stop-color="#f4f4f4"/></linearGradient></defs><rect x="0.5" y="0.5" width="12" height="12" fill="#fff" stroke="#858585"/><rect x="2" y="2" width="9" height="9" fill="url(#gcb)"/><path d="M3.6 7.2 L5.9 10.6 L10.4 2.6" stroke="#3550a0" stroke-width="1.9" fill="none" stroke-linejoin="round"/></svg>
<div style="position:absolute;left:700.00px;top:392.34px;font-size:12px;line-height:14px;font-weight:400;color:#222;white-space:pre;">Idle scan:</div>
<svg style="position:absolute;left:906px;top:392px" width="13" height="13"><defs><linearGradient id="gcb" x1="0" y1="0" x2="1" y2="1"><stop offset="0" stop-color="#c4c8d4"/><stop offset="0.6" stop-color="#eceef2"/><stop offset="1" stop-color="#f4f4f4"/></linearGradient></defs><rect x="0.5" y="0.5" width="12" height="12" fill="#fff" stroke="#858585"/><rect x="2" y="2" width="9" height="9" fill="url(#gcb)"/><path d="M3.6 7.2 L5.9 10.6 L10.4 2.6" stroke="#3550a0" stroke-width="1.9" fill="none" stroke-linejoin="round"/></svg>
<div style="position:absolute;left:700.00px;top:415.84px;font-size:12px;line-height:14px;font-weight:400;color:#222;white-space:pre;">Free subscription weight:</div>
<div style="position:absolute;left:905px;top:412px;width:300px;height:22px;background:linear-gradient(#e4e8ee 0px,#f6f8fa 3px,#fff 5px,#fff);border:1px solid #bdbdbd;"></div>
<div style="position:absolute;left:909.00px;top:416.84px;font-size:12px;line-height:14px;font-weight:400;color:#000;white-space:pre;">0</div>
<div style="position:absolute;left:700.00px;top:441.84px;font-size:12px;line-height:14px;font-weight:400;color:#222;white-space:pre;">Linked input:</div>
<div style="position:absolute;left:905px;top:438px;width:300px;height:22px;background:linear-gradient(#e4e8ee 0px,#f6f8fa 3px,#fff 5px,#fff);border:1px solid #bdbdbd;"></div>
<div style="position:absolute;left:909.00px;top:442.84px;font-size:12px;line-height:14px;font-weight:400;color:#000;white-space:pre;">Not linked</div>
<div style="position:absolute;left:1187px;top:438px;width:18px;height:22px;background:linear-gradient(#f6f6f6,#ececec 45%,#dadada 55%,#d4d4d4);border:1px solid #b8b8b8;border-bottom-color:#b5b8c8;border-radius:0 2px 0 0;box-shadow:inset -1px 1px 0 #fff;"></div>
<svg style="position:absolute;left:1187px;top:438px" width="18" height="22"><path d="M4 8 H6.6 L9 10.4 L11.4 8 H14 L9 13 Z" fill="#333"/></svg>
<div style="position:absolute;left:700.00px;top:467.84px;font-size:12px;line-height:14px;font-weight:400;color:#222;white-space:pre;">UDP RTP port number (2 ports):</div>
<div style="position:absolute;left:905px;top:464px;width:300px;height:22px;background:linear-gradient(#e4e8ee 0px,#f6f8fa 3px,#fff 5px,#fff);border:1px solid #bdbdbd;"></div>
<div style="position:absolute;left:909.00px;top:468.84px;font-size:12px;line-height:14px;font-weight:400;color:#000;white-space:pre;">0</div>
<div style="position:absolute;left:700.00px;top:493.84px;font-size:12px;line-height:14px;font-weight:400;color:#222;white-space:pre;">Next tune delay in ms (0-2000):</div>
<div style="position:absolute;left:905px;top:490px;width:300px;height:22px;background:linear-gradient(#e4e8ee 0px,#f6f8fa 3px,#fff 5px,#fff);border:1px solid #bdbdbd;"></div>
<div style="position:absolute;left:909.00px;top:494.84px;font-size:12px;line-height:14px;font-weight:400;color:#000;white-space:pre;">200</div>
<div style="position:absolute;left:700.00px;top:520.34px;font-size:12px;line-height:14px;font-weight:400;color:#222;white-space:pre;">Send full PLAY cmd:</div>
<svg style="position:absolute;left:906px;top:520px" width="13" height="13"><defs><linearGradient id="gcb" x1="0" y1="0" x2="1" y2="1"><stop offset="0" stop-color="#c4c8d4"/><stop offset="0.6" stop-color="#eceef2"/><stop offset="1" stop-color="#f4f4f4"/></linearGradient></defs><rect x="0.5" y="0.5" width="12" height="12" fill="#fff" stroke="#858585"/><rect x="2" y="2" width="9" height="9" fill="url(#gcb)"/><path d="M3.6 7.2 L5.9 10.6 L10.4 2.6" stroke="#3550a0" stroke-width="1.9" fill="none" stroke-linejoin="round"/></svg>
<div style="position:absolute;left:700.00px;top:543.84px;font-size:12px;line-height:14px;font-weight:400;color:#222;white-space:pre;">Grace period:</div>
<div style="position:absolute;left:905px;top:540px;width:300px;height:22px;background:linear-gradient(#e4e8ee 0px,#f6f8fa 3px,#fff 5px,#fff);border:1px solid #bdbdbd;"></div>
<div style="position:absolute;left:909.00px;top:544.84px;font-size:12px;line-height:14px;font-weight:400;color:#000;white-space:pre;">0</div>
<div style="position:absolute;left:700.00px;top:570.34px;font-size:12px;line-height:14px;font-weight:400;color:#222;white-space:pre;">Force teardown delay:</div>
<svg style="position:absolute;left:906px;top:570px" width="13" height="13"><defs><linearGradient id="gcb" x1="0" y1="0" x2="1" y2="1"><stop offset="0" stop-color="#c4c8d4"/><stop offset="0.6" stop-color="#eceef2"/><stop offset="1" stop-color="#f4f4f4"/></linearGradient></defs><rect x="0.5" y="0.5" width="12" height="12" fill="#fff" stroke="#858585"/><rect x="2" y="2" width="9" height="9" fill="url(#gcb)"/></svg>
<div style="position:absolute;left:700.00px;top:593.84px;font-size:12px;line-height:14px;font-weight:400;color:#222;white-space:pre;">Pass subscription weight:</div>
<div style="position:absolute;left:905px;top:590px;width:300px;height:22px;background:linear-gradient(#e4e8ee 0px,#f6f8fa 3px,#fff 5px,#fff);border:1px solid #bdbdbd;"></div>
<div style="position:absolute;left:909.00px;top:594.84px;font-size:12px;line-height:14px;font-weight:400;color:#000;white-space:pre;">1</div>
<div style="position:absolute;left:700.00px;top:619.84px;font-size:12px;line-height:14px;font-weight:400;color:#222;white-space:pre;">Pass specinv:</div>
<div style="position:absolute;left:905px;top:616px;width:300px;height:22px;background:linear-gradient(#e4e8ee 0px,#f6f8fa 3px,#fff 5px,#fff);border:1px solid #bdbdbd;"></div>
<div style="position:absolute;left:909.00px;top:620.84px;font-size:12px;line-height:14px;font-weight:400;color:#000;white-space:pre;">Do not use</div>
<div style="position:absolute;left:1187px;top:616px;width:18px;height:22px;background:linear-gradient(#f6f6f6,#ececec 45%,#dadada 55%,#d4d4d4);border:1px solid #b8b8b8;border-bottom-color:#b5b8c8;border-radius:0 2px 0 0;box-shadow:inset -1px 1px 0 #fff;"></div>
<svg style="position:absolute;left:1187px;top:616px" width="18" height="22"><path d="M4 8 H6.6 L9 10.4 L11.4 8 H14 L9 13 Z" fill="#333"/></svg>
<div style="position:absolute;left:700.00px;top:645.84px;font-size:12px;line-height:14px;font-weight:400;color:#222;white-space:pre;">Tuner bind IP address:</div>
<div style="position:absolute;left:905px;top:642px;width:300px;height:22px;background:linear-gradient(#e4e8ee 0px,#f6f8fa 3px,#fff 5px,#fff);border:1px solid #bdbdbd;"></div>
<div style="position:absolute;left:700.00px;top:714.34px;font-size:12px;line-height:14px;font-weight:400;color:#222;white-space:pre;">Remove scrambled bits:</div>
<svg style="position:absolute;left:906px;top:714px" width="13" height="13"><defs><linearGradient id="gcb" x1="0" y1="0" x2="1" y2="1"><stop offset="0" stop-color="#c4c8d4"/><stop offset="0.6" stop-color="#eceef2"/><stop offset="1" stop-color="#f4f4f4"/></linearGradient></defs><rect x="0.5" y="0.5" width="12" height="12" fill="#fff" stroke="#858585"/><rect x="2" y="2" width="9" height="9" fill="url(#gcb)"/></svg>
<div style="position:absolute;left:692px;top:822px;width:75px;height:22px;background:linear-gradient(#ffffff,#f4f4f4 60%,#e4e4e4);border:1px solid #999;border-radius:3px;"></div>
<svg style="position:absolute;left:708px;top:825px" width="16" height="16" viewBox="0 0 16 16"><path d="M0.5 1 Q0.5 0.5 1 0.5 H9.5 L12.5 3.5 V14.5 H1 Q0.5 14.5 0.5 14Z" fill="#e4f0fc" stroke="#4a80d0" stroke-width="1"/>
<rect x="1.5" y="10.3" width="5" height="2.5" fill="#40a8f0"/>
<rect x="6" y="6" width="9.6" height="9.6" fill="#5a8ad8" stroke="#2a58b0" stroke-width="0.9"/>
<rect x="7.6" y="6.6" width="6.4" height="3.2" fill="#fff"/><circle cx="9.3" cy="8.2" r="0.7" fill="#4a70c0"/>
<rect x="7.6" y="12" width="6.4" height="3" fill="#fff"/><rect x="8.6" y="12.8" width="4.4" height="1.6" fill="#7cc030"/></svg>
<div style="position:absolute;left:726.00px;top:826.69px;font-size:11px;line-height:13px;font-weight:400;color:#333;white-space:pre;transform:scaleX(1.0000);transform-origin:0 0;">Save</div>
<div style="position:absolute;left:1139px;top:822px;width:75px;height:22px;background:linear-gradient(#ffffff,#f4f4f4 60%,#e4e4e4);border:1px solid #999;border-radius:3px;"></div>
<svg style="position:absolute;left:1156px;top:825px" width="16" height="16" viewBox="0 0 16 16"><defs><radialGradient id="ghelp" cx="0.3" cy="0.3" r="0.9"><stop offset="0" stop-color="#b4cff0"/><stop offset="1" stop-color="#2c5cae"/></radialGradient></defs>
<circle cx="8" cy="8" r="7.6" fill="#4a78c0"/>
<circle cx="8" cy="8" r="6.6" fill="#fff"/>
<circle cx="8" cy="8" r="5.8" fill="url(#ghelp)"/>
<text x="8" y="12" font-family="Liberation Sans" font-size="10.5" font-weight="700" fill="#fff" text-anchor="middle">?</text></svg>
<div style="position:absolute;left:1173.95px;top:826.69px;font-size:11px;line-height:13px;font-weight:400;color:#333;white-space:pre;transform:scaleX(1.0476);transform-origin:0 0;">Help</div>
<div style="position:absolute;left:5px;top:864px;width:1224px;height:22px;background:#dfdfdf;border:1px solid #cbcbcb;"></div>
<div style="position:absolute;left:1210px;top:868px;width:15px;height:15px;background:#fff;border:1px solid #c8c8c8;border-radius:3px;"></div>
<svg style="position:absolute;left:1210px;top:868px" width="15" height="15"><path d="M4 7 L7.5 3.5 L11 7 M4 11 L7.5 7.5 L11 11" stroke="#606060" stroke-width="1.3" fill="none"/></svg>
</div></body></html>
